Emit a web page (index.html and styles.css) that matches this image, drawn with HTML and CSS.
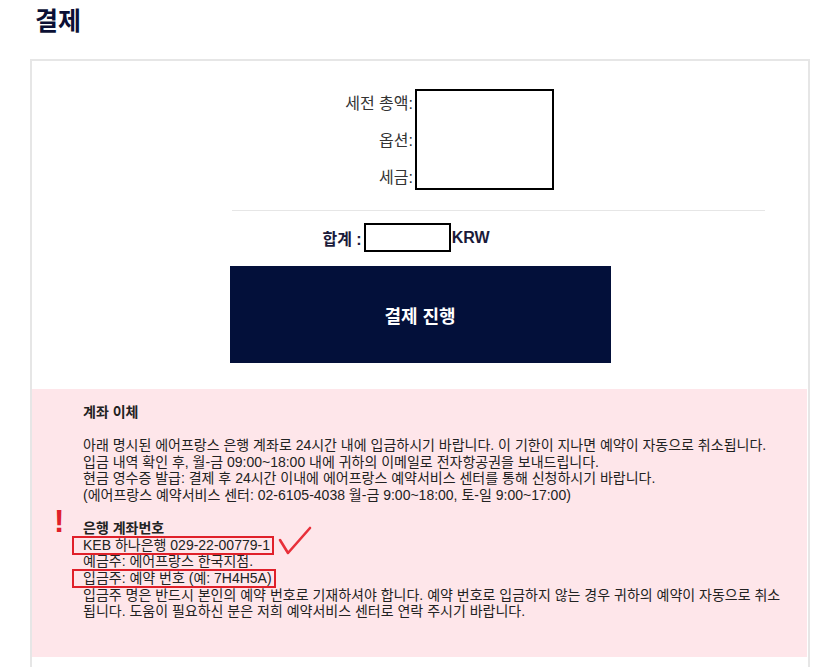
FILE: index.html
```html
<!DOCTYPE html>
<html lang="ko">
<head>
  <meta charset="UTF-8" />
  <meta name="viewport" content="width=device-width, initial-scale=1.0"/>
  <title>결제</title>
  <link rel="stylesheet" href="styles.css">
</head>
<body>
  <div class="page">
    <h1 class="page-title">결제</h1>

    <div class="card">
      <div class="summary">
        <div class="summary-labels">
          <div>세전 총액:</div>
          <div>옵션:</div>
          <div>세금:</div>
        </div>
        <div class="summary-box"></div>
      </div>

      <hr class="divider">

      <div class="total">
        <span>합계 :</span>
        <span class="total-box"></span>
        <span>KRW</span>
      </div>

      <div class="actions">
        <button class="pay-btn">결제 진행</button>
      </div>

      <div class="transfer">
        <div class="transfer-title">계좌 이체</div>
        <p>아래 명시된 에어프랑스 은행 계좌로 24시간 내에 입금하시기 바랍니다. 이 기한이 지나면 예약이 자동으로 취소됩니다.<br>
        입금 내역 확인 후, 월-금 09:00~18:00 내에 귀하의 이메일로 전자항공권을 보내드립니다.<br>
        현금 영수증 발급: 결제 후 24시간 이내에 에어프랑스 예약서비스 센터를 통해 신청하시기 바랍니다.<br>
        (에어프랑스 예약서비스 센터: 02-6105-4038 월-금 9:00~18:00, 토-일 9:00~17:00)</p>

        <div class="transfer-title">은행 계좌번호</div>
        <div class="account">
          <div>
            <span class="mark">KEB 하나은행 029-22-00779-1
              <svg class="check" width="36" height="32" viewBox="0 0 36 32">
                <path d="M2 14 L10 27 L32 2" fill="none" stroke="#e8303a" stroke-width="2.6" stroke-linecap="round" stroke-linejoin="round"/>
              </svg>
            </span>
          </div>
          <div>예금주: 에어프랑스 한국지점.</div>
          <div><span class="mark">입금주: 예약 번호 (예: 7H4H5A)</span></div>
          <div>입금주 명은 반드시 본인의 예약 번호로 기재하셔야 합니다. 예약 번호로 입금하지 않는 경우 귀하의 예약이 자동으로 취소됩니다. 도움이 필요하신 분은 저희 예약서비스 센터로 연락 주시기 바랍니다.</div>
        </div>

        <span class="alert">!</span>
      </div>
    </div>
  </div>
</body>
</html>
```

FILE: styles.css
```css
:root {
  --navy: #03103a;
  --title-color: #0b1035;
  --border-color: #e6e6e6;
  --pink-bg: #fee6ea;
  --text-color: #222222;
  --mark-color: #e0202a;
}
body {
  margin: 0;
  font-family: "Liberation Sans", "Noto Sans CJK KR", Arial, sans-serif;
  color: var(--text-color);
  background: #ffffff;
}
.page {
  padding-left: 30px;
  width: 780px;
}
.page-title {
  margin: 0 0 0 5px;
  padding-top: 9px;
  font-size: 25px;
  line-height: 25px;
  font-weight: bold;
  color: var(--title-color);
}
.card {
  margin-top: 25px;
  border: 2px solid var(--border-color);
  border-bottom: none;
  height: 620px;
}
.summary {
  display: flex;
  justify-content: center;
  padding-top: 24px;
  font-size: 16px;
  color: #333;
}
.summary-labels {
  width: 127px;
  padding-right: 2px;
  text-align: right;
  line-height: 37px;
}
.summary-box {
  box-sizing: border-box;
  width: 139px;
  height: 101px;
  margin-top: 4px;
  border: 2px solid #000;
}
.divider {
  margin: 14px 0 0 200px;
  width: 533px;
  height: 0;
  border: none;
  border-top: 1px solid var(--border-color);
}
.total {
  display: flex;
  justify-content: center;
  align-items: center;
  margin-top: 12px;
  padding-right: 28px;
  font-size: 16px;
  font-weight: bold;
  color: #1a1a3a;
}
.total-box {
  box-sizing: border-box;
  width: 87px;
  height: 29px;
  margin: 0 1px 0 2px;
  border: 2px solid #000;
}
.actions {
  display: flex;
  justify-content: center;
  margin-top: 14px;
}
.pay-btn {
  width: 381px;
  height: 97px;
  border: none;
  background-color: var(--navy);
  color: #fff;
  font-family: inherit;
  font-size: 18px;
  font-weight: bold;
  cursor: pointer;
}
.transfer {
  position: relative;
  margin-top: 26px;
  margin-right: 1px;
  padding: 15px 18px 37px 51px;
  background-color: var(--pink-bg);
  font-size: 14px;
  line-height: 16.6px;
}
.transfer-title {
  font-weight: bold;
}
.transfer p {
  margin: 16.6px 0;
}
.mark {
  position: relative;
  display: inline-block;
  margin: -2px 0 -2px -11px;
  padding: 0 2px 0 9px;
  border: 2px solid var(--mark-color);
  line-height: 15px;
}
.check {
  position: absolute;
  left: 100%;
  top: -12px;
  margin-left: 6px;
}
.alert {
  position: absolute;
  left: 22px;
  top: 117px;
  font-size: 31px;
  line-height: 31px;
  font-weight: bold;
  color: var(--mark-color);
}
```
